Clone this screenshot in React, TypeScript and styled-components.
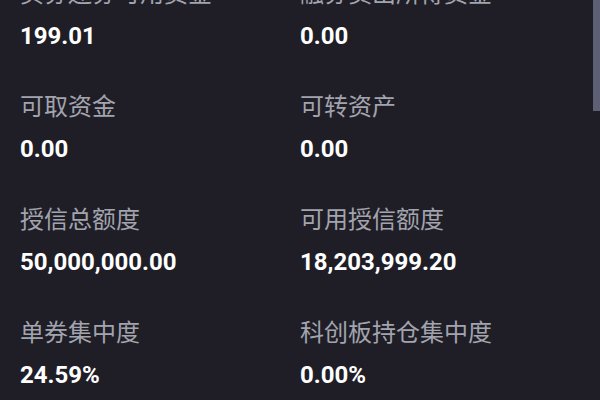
import React from "react";
import styled, { createGlobalStyle } from "styled-components";

const Global = createGlobalStyle`
  html, body { margin: 0; padding: 0; background: #1f1e26; }
  body { width: 600px; height: 400px; overflow: hidden; }
  #root { width: 600px; height: 400px; }
`;

const Screen = styled.div`
  position: relative;
  width: 600px;
  height: 400px;
  overflow: hidden;
  background: #1f1e26;
`;

const Grid = styled.div`
  display: grid;
  grid-template-columns: 280px 280px;
  row-gap: 37px;
  padding-left: 20px;
  margin-top: -24px;
`;

const Cell = styled.div`
  display: flex;
  flex-direction: column;
  gap: 12px;
`;

const Label = styled.div`
  font-family: "Noto Sans CJK SC", "Noto Sans", sans-serif;
  font-size: 24px;
  line-height: 32px;
  font-weight: 400;
  color: #a2a4ae;
  white-space: nowrap;
`;

const Value = styled.div`
  font-family: Roboto, "Liberation Sans", sans-serif;
  font-size: 24px;
  line-height: 32px;
  font-weight: 700;
  color: #ffffff;
  white-space: nowrap;
`;

const ScrollThumb = styled.div`
  position: absolute;
  right: 0;
  top: 0;
  width: 7px;
  height: 111px;
  background: #5d6075;
`;

const items: [string, string][] = [
  ["买券还券可用资金", "199.01"],
  ["融券卖出所得资金", "0.00"],
  ["可取资金", "0.00"],
  ["可转资产", "0.00"],
  ["授信总额度", "50,000,000.00"],
  ["可用授信额度", "18,203,999.20"],
  ["单券集中度", "24.59%"],
  ["科创板持仓集中度", "0.00%"],
];

export default function App() {
  return (
    <>
      <Global />
      <Screen>
        <Grid>
          {items.map(([l, v], i) => (
            <Cell key={i}>
              <Label>{l}</Label>
              <Value>{v}</Value>
            </Cell>
          ))}
        </Grid>
        <ScrollThumb />
      </Screen>
    </>
  );
}
